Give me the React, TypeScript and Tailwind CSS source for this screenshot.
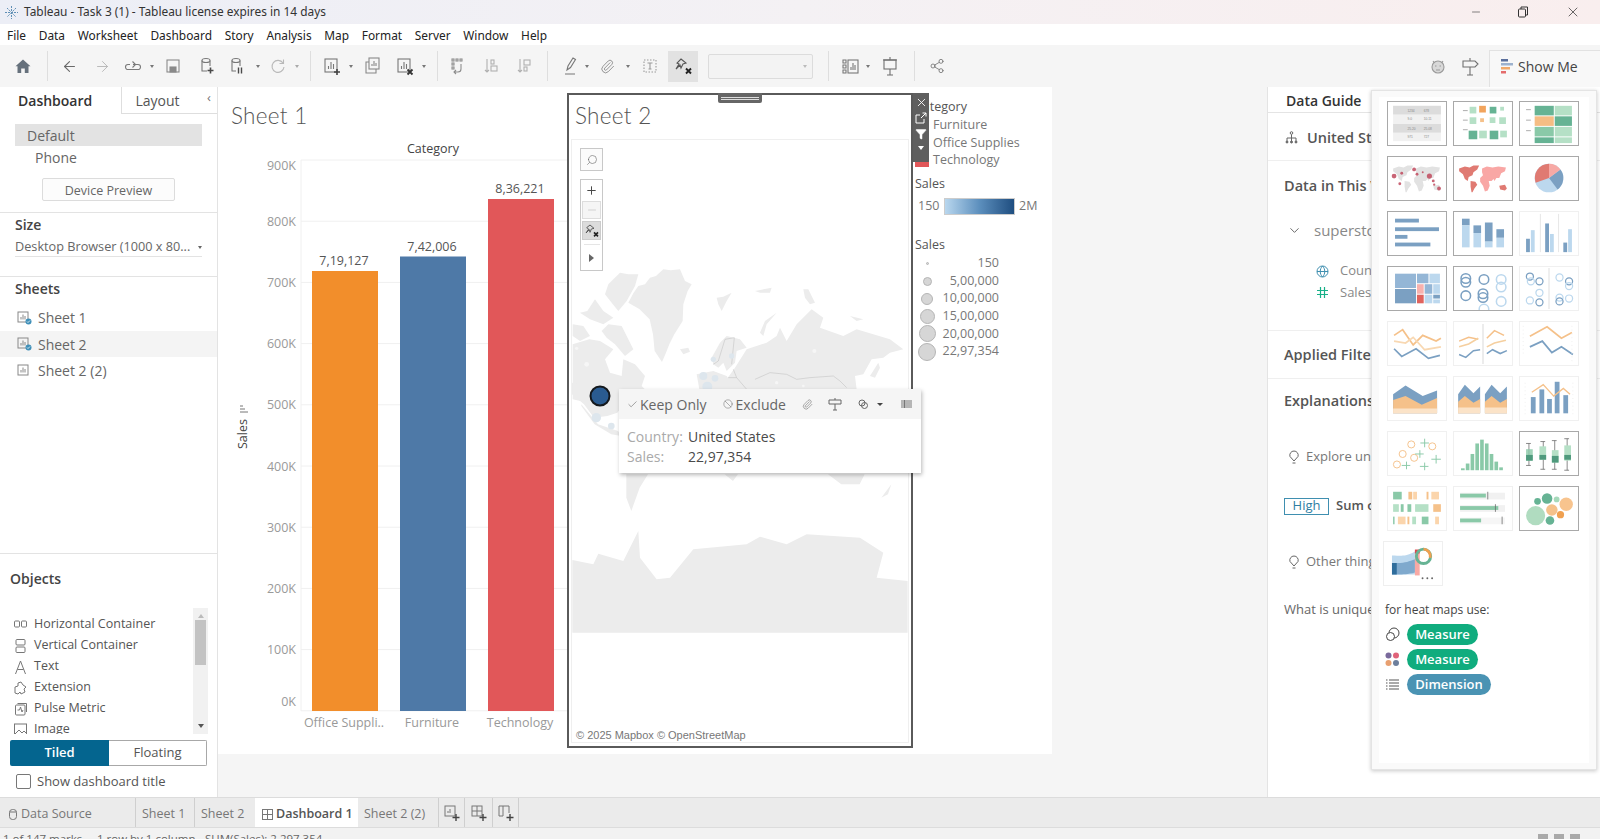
import React from "react";
import { ArrowLeft, ArrowRight, Share2, Paperclip, X, Minus, Plus, ChevronDown, Search, Filter, Check, Ban } from "lucide-react";

const Ico = ({ children, c = "#7a7a7a", cls = "w-[24px]" }: { children: React.ReactNode; c?: string; cls?: string }) => (
  <svg className={`${cls} h-[24px] shrink-0`} viewBox="0 0 24 24" fill="none" stroke={c} strokeWidth={1.1}>
    {children}
  </svg>
);
const Arrow = ({ cls, c = "#777" }: { cls: string; c?: string }) => (
  <div className={`w-[8px] h-[24px] flex items-center justify-center shrink-0 ${cls}`}>
    <div className="w-0 h-0 border-l-[2.5px] border-r-[2.5px] border-t-[3px] border-l-transparent border-r-transparent" style={{ borderTopColor: c }} />
  </div>
);
const Sep = ({ cls }: { cls: string }) => <div className={`w-px h-[30px] bg-[#dedede] shrink-0 ${cls}`} />;
const Wrap = ({ cls, children }: { cls: string; children: React.ReactNode }) => <div className={`w-[24px] h-[24px] shrink-0 flex items-center justify-center ${cls}`}>{children}</div>;
const ChartIco = ({ c = "#777", mark }: { c?: string; mark?: React.ReactNode }) => (
  <Ico c={c}>
    <rect x="6" y="5" width="12" height="13" />
    <path d="M9.5 15v-3M12 15V8M14.5 15v-5" />
    {mark}
  </Ico>
);

const Toolbar = () => (
  <div className="h-[42px] bg-[#f5f5f5] flex items-center pl-[11px] shrink-0">
    <Wrap cls="">
      <Ico c="none"><path d="M12 5.5l7.5 6.8h-2V19h-3.7v-4.6h-3.6V19H6.5v-6.7h-2z" fill="#66717c" /></Ico>
    </Wrap>
    <Sep cls="ml-[12px]" />
    <Wrap cls="ml-[9px]"><ArrowLeft size={17} strokeWidth={1.5} color="#6a6a6a" /></Wrap>
    <Wrap cls="ml-[9px]"><ArrowRight size={17} strokeWidth={1.3} color="#b5b5b5" /></Wrap>
    <Wrap cls="ml-[7px]"><Ico><path d="M9 10.5H7a2.5 2.5 0 0 0 0 5h10a2.5 2.5 0 0 0 0-5h-5" /><path d="M11.5 7.5l3 3-3 3" /></Ico></Wrap>
    <Arrow cls="ml-[3px]" />
    <Wrap cls="ml-[5px]"><Ico c="#8a8a8a"><rect x="6" y="6" width="12" height="12" /><rect x="9" y="13" width="6" height="5" fill="#8a8a8a" /></Ico></Wrap>
    <Wrap cls="ml-[10px]"><Ico c="#777"><ellipse cx="11" cy="6.5" rx="4" ry="2" /><path d="M7 6.5V17h5M15 6.5V12" /><path d="M15.5 13.5v6M12.5 16.5h6" stroke="#4a4a4a" strokeWidth={1.6} /></Ico></Wrap>
    <Wrap cls="ml-[6px]"><Ico c="#777"><ellipse cx="11" cy="6.5" rx="4" ry="2" /><path d="M7 6.5V17h4M15 6.5V12" /><path d="M13.5 13.5v6M16.5 13.5v6" stroke="#4a4a4a" strokeWidth={1.4} /></Ico></Wrap>
    <Arrow cls="ml-[5px]" />
    <Wrap cls="ml-[4px]"><Ico c="#b9b9b9"><path d="M17 9a6 6 0 1 0 1 4" /><path d="M17.5 5.5V9.5H13.5" /></Ico></Wrap>
    <Arrow cls="ml-[3px]" c="#aaa" />
    <Sep cls="ml-[9px]" />
    <Wrap cls="ml-[8px]"><ChartIco mark={<path d="M18 15v6M15 18h6" stroke="#444" strokeWidth={1.6} />} /></Wrap>
    <Arrow cls="ml-[4px]" />
    <Wrap cls="ml-[5px]"><Ico c="#888"><rect x="9" y="4" width="10" height="11" /><path d="M12 12v-2M14 12V7M16 12V9" /><path d="M9 8H6v11h10v-4" /></Ico></Wrap>
    <Wrap cls="ml-[8px]"><ChartIco mark={<path d="M15.5 15.5l5 5M20.5 15.5l-5 5" stroke="#333" strokeWidth={1.8} />} /></Wrap>
    <Arrow cls="ml-[4px]" />
    <Sep cls="ml-[9px]" />
    <Wrap cls="ml-[7px]"><Ico c="#8d8d8d"><rect x="7" y="5" width="2" height="2" /><rect x="11" y="5" width="2" height="2" /><rect x="15" y="5" width="2" height="2" /><rect x="7" y="9" width="2" height="2" /><rect x="7" y="13" width="2" height="2" /><path d="M16 10v5a3 3 0 0 1-3 3H9M11 16l-2 2 2 2" /></Ico></Wrap>
    <Wrap cls="ml-[10px]"><Ico c="#b0b0b0"><path d="M8 5v13M6 16l2 2 2-2" /><rect x="12" y="6" width="3" height="4" /><rect x="12" y="12" width="6" height="5" /></Ico></Wrap>
    <Wrap cls="ml-[9px]"><Ico c="#b0b0b0"><path d="M8 5v13M6 16l2 2 2-2" /><rect x="12" y="6" width="6" height="5" /><rect x="12" y="13" width="3" height="4" /></Ico></Wrap>
    <Sep cls="ml-[11px]" />
    <Wrap cls="ml-[10px]"><Ico c="#777"><path d="M9 16l1-4 5-8 2.5 1.5-5 8zM7 20h10" /></Ico></Wrap>
    <Arrow cls="ml-px" />
    <Wrap cls="ml-[4px]"><Paperclip size={15} strokeWidth={1.2} color="#777" /></Wrap>
    <Arrow cls="ml-[5px]" />
    <Wrap cls="ml-[6px]"><Ico c="#9a9a9a"><rect x="6" y="6" width="12" height="12" strokeDasharray="1.5 1.5" /><path d="M9.5 9h5M12 9v6M10.5 15h3" /></Ico></Wrap>
    <div className="ml-[6px] w-[30px] h-[31px] bg-[#e2e2e2] flex items-center justify-center shrink-0">
      <Ico c="#555"><path d="M10 5l5 4-3 1-2 4-1-3-4 4 3-5-2-1z" /><path d="M15 14.5l5 5M20 14.5l-5 5" stroke="#222" strokeWidth={1.9} /></Ico>
    </div>
    <div className="ml-[10px] w-[105px] h-[25px] border border-[#dcdcdc] bg-[#f3f3f3] rounded-[2px] flex items-center justify-end pr-[3px] shrink-0"><Arrow cls="" c="#bbb" /></div>
    <Sep cls="ml-[15px]" />
    <Wrap cls="ml-[9px]"><Ico c="#777"><path d="M5 6h3v3H5zM5 11h3v3H5zM5 16h3v3H5z" /><rect x="10" y="6" width="10" height="13" /><path d="M13 16v-3M15 16V9M17 16v-5" /></Ico></Wrap>
    <Arrow cls="ml-[2px]" />
    <Wrap cls="ml-[6px]"><Ico c="#6f6f6f"><path d="M5 6h14" /><rect x="6" y="6" width="12" height="9" /><path d="M12 3v3M12 15v6M9 21h6" /></Ico></Wrap>
    <Sep cls="ml-[12px]" />
    <Wrap cls="ml-[10px]"><Share2 size={16} strokeWidth={1.2} color="#6f6f6f" /></Wrap>
    <div className="ml-auto flex items-center self-end h-[37px] pb-[5px]">
      <Wrap cls="mr-[8px]"><Ico c="#9a9a9a"><circle cx="12" cy="13" r="6" fill="#d8d8d8" /><path d="M7 7l1.5 2M17 7l-1.5 2M9 12h1.5M13.5 12H15M10 16h4" /></Ico></Wrap>
      <Wrap cls="mr-[7px]"><Ico c="#6f6f6f"><path d="M5 7h12l3 3-3 3H5zM12 4v3M12 13v8M9 21h6" /></Ico></Wrap>
      <div className="w-[111px] h-[37px] -mb-[5px] pb-[6px] bg-[#f8f8f8] border-l border-t border-[#e2e2e2] flex items-center pl-[11px] gap-[5px] text-[14px] text-[#444] font-['Open_Sans',sans-serif]">
        <svg width="12" height="18" viewBox="0 0 12 18"><rect x="0" y="2" width="7" height="2.5" fill="#5b6f9c" /><rect x="0" y="6" width="12" height="2.5" fill="#9db2ce" /><rect x="0" y="10" width="9" height="2.5" fill="#f2a96a" /><rect x="0" y="14" width="5" height="2.5" fill="#e46c6c" /></svg>
        Show Me
      </div>
    </div>
  </div>
);

const Obj = ({ icon, label }: { icon: React.ReactNode; label: string }) => (
  <div className="h-[21px] flex items-center gap-[7px] pl-[14px] shrink-0">
    <svg className="shrink-0" width="13" height="16" viewBox="0 0 13 16" fill="none" stroke="#777" strokeWidth="1">{icon}</svg>
    <span>{label}</span>
  </div>
);

const SheetIcon = ({ done }: { done?: boolean }) => (
  <svg className="shrink-0" width="15" height="16" viewBox="0 0 15 16" fill="none" stroke="#888" strokeWidth="1">
    <rect x="1" y="2" width="10" height="10" />
    <path d="M4 9.5V7M6 9.5V4.5M8 9.5V6" />
    {done && <circle cx="11.5" cy="11.5" r="3" fill="#3f8fb8" stroke="none" />}
    {done && <path d="M10 11.5l1 1 2-2" stroke="#fff" strokeWidth="0.8" />}
  </svg>
);

const Sidebar = () => (
  <div className="w-[218px] shrink-0 bg-white border-r border-[#e3e3e3] flex flex-col text-[12.5px] text-[#555] overflow-hidden">
    <div className="flex h-[27px] shrink-0">
      <div className="w-[122px] pl-[18px] flex items-center font-semibold text-[14px] text-[#333]">Dashboard</div>
      <div className="w-[96px] bg-white border-l border-b border-[#dedede] flex items-center pl-[13px] text-[14px] text-[#555] relative">
        Layout
        <span className="absolute right-[6px] top-[1px] text-[13px] text-[#777]">‹</span>
      </div>
    </div>
    <div className="mt-[10px] mx-[15px] h-[22px] bg-[#e3e3e3] pl-[12px] flex items-center text-[14px] text-[#666] shrink-0">Default</div>
    <div className="h-[22px] pl-[35px] flex items-center text-[14px] text-[#666] shrink-0">Phone</div>
    <div className="mt-[10px] ml-[42px] w-[133px] h-[23px] pt-[3px] border border-[#dcdcdc] rounded-[2px] bg-[#fcfcfc] flex items-center justify-center text-[12.5px] text-[#666] shrink-0">Device Preview</div>
    <div className="mt-[11px] h-px bg-[#e3e3e3] shrink-0" />
    <div className="h-[23px] pl-[15px] flex items-center font-semibold text-[14px] text-[#444] shrink-0">Size</div>
    <div className="h-[21px] pt-[2px] mx-[15px] border-b border-[#e3e3e3] flex items-center justify-between text-[12.7px] text-[#666] shrink-0">
      <span className="whitespace-nowrap">Desktop Browser (1000 x 80...</span>
      <div className="w-0 h-0 border-l-[2.5px] border-r-[2.5px] border-t-[3px] border-l-transparent border-r-transparent border-t-[#666]" />
    </div>
    <div className="mt-[19px] h-px bg-[#e3e3e3] shrink-0" />
    <div className="h-[23px] pl-[15px] flex items-center font-semibold text-[14px] text-[#444] shrink-0">Sheets</div>
    <div className="mt-[4px] shrink-0 text-[14px] text-[#666]">
      <div className="h-[27px] pl-[17px] flex items-center gap-[6px]"><SheetIcon done />Sheet 1</div>
      <div className="h-[26px] pl-[17px] flex items-center gap-[6px] bg-[#f4f4f4]"><SheetIcon done />Sheet 2</div>
      <div className="h-[27px] pl-[17px] flex items-center gap-[6px]"><SheetIcon />Sheet 2 (2)</div>
    </div>
    <div className="flex-1" />
    <div className="h-px bg-[#e3e3e3] shrink-0" />
    <div className="h-[54px] pt-[15px] pl-[10px] shrink-0 font-semibold text-[14px] text-[#444] leading-[20px]">Objects</div>
    <div className="h-[126px] flex shrink-0">
      <div className="flex-1 overflow-hidden pt-[6px]">
        <Obj label="Horizontal Container" icon={<><rect x="0.5" y="4" width="5" height="6" rx="1" /><rect x="7.5" y="4" width="5" height="6" rx="1" /></>} />
        <Obj label="Vertical Container" icon={<><rect x="2" y="1.5" width="9" height="5.5" rx="1" /><rect x="2" y="9" width="9" height="5.5" rx="1" /></>} />
        <Obj label="Text" icon={<path d="M1.5 15L6.5 2l5 13M3.5 10.5h6" />} />
        <Obj label="Extension" icon={<path d="M1 7l3-1V3l3-1 2 3 3 2-2 2 1 3-4 2-1-2-2 2-3-1V9z" />} />
        <Obj label="Pulse Metric" icon={<><rect x="1.5" y="4" width="9.5" height="10" rx="1" /><path d="M3.5 2.5h9V11M3.5 9h2l1-3 1.5 5 1-2" /></>} />
        <Obj label="Image" icon={<><rect x="0.5" y="2" width="12" height="12" /><path d="M1 12l4-4 3 3 2-2 3 3" /></>} />
      </div>
      <div className="w-[15px] bg-[#f1f1f1] mr-[9px] flex flex-col items-center shrink-0">
        <div className="mt-[6px] w-0 h-0 border-l-[3px] border-r-[3px] border-b-[4px] border-l-transparent border-r-transparent border-b-[#bbb]" />
        <div className="mt-[2px] w-[11px] h-[45px] bg-[#c3c3c3]" />
        <div className="mt-auto mb-[6px] w-0 h-0 border-l-[3px] border-r-[3px] border-t-[4px] border-l-transparent border-r-transparent border-t-[#555]" />
      </div>
    </div>
    <div className="mt-[6px] ml-[10px] w-[197px] h-[26px] flex rounded-[2px] shrink-0 overflow-hidden text-[13px]">
      <div className="w-[99px] bg-[#04658f] text-white font-semibold flex items-center justify-center">Tiled</div>
      <div className="flex-1 bg-white border-y border-r border-[#a8a8a8] text-[#555] flex items-center justify-center">Floating</div>
    </div>
    <div className="h-[31px] pl-[16px] flex items-center gap-[6px] shrink-0 text-[#555] text-[13px]">
      <div className="w-[15px] h-[15px] border border-[#777] rounded-[2px] bg-white" />
      Show dashboard title
    </div>
  </div>
);

const ticks = [900, 800, 700, 600, 500, 400, 300, 200, 100, 0];
const bars = [
  { x: 312, top: 271, c: "#f28e2b", v: "7,19,127", l: "Office Suppli.." },
  { x: 400, top: 256.5, c: "#4e79a7", v: "7,42,006", l: "Furniture" },
  { x: 488, top: 199, c: "#e15759", v: "8,36,221", l: "Technology" },
];

const Sheet1 = () => (
  <div className="w-[349px] shrink-0 flex flex-col">
    <div className="h-[50px] pl-[13px] pt-[12px] text-[22.5px] leading-[34px] text-[#555] font-['Lato',sans-serif] font-light tracking-[0.3px] shrink-0">Sheet 1</div>
    <svg className="w-[349px] h-[617px] block" viewBox="218 137 349 617" fontFamily="'Open Sans', sans-serif">
      <text x="433" y="153" textAnchor="middle" fontSize="12.5" fill="#444">Category</text>
      {ticks.map((t, i) => {
        const y = 160 + i * 61.2;
        const ly = t === 900 ? y + 10 : t === 0 ? y - 4.5 : y + 4.5;
        return (
          <g key={t}>
            <line x1="301" x2="567" y1={y} y2={y} stroke="#f0f0f0" />
            <text x="296" y={ly} textAnchor="end" fontSize="12.5" fill="#9a9a9a">{t}K</text>
          </g>
        );
      })}
      <line x1="301" x2="301" y1="160" y2="711" stroke="#f0f0f0" />
      {bars.map((b) => (
        <g key={b.x}>
          <rect x={b.x} y={b.top} width="66" height={711 - b.top} fill={b.c} />
          <text x={b.x + 32} y={b.top - 6} textAnchor="middle" fontSize="12.5" fill="#555">{b.v}</text>
          <text x={b.x + 32} y="727" textAnchor="middle" fontSize="12.5" fill="#999">{b.l}</text>
        </g>
      ))}
      <text transform="translate(247 449) rotate(-90)" fontSize="12.5" fill="#444">Sales</text>
      <path d="M240 412h8M240 409h5M240 406h3" stroke="#777" strokeWidth="1" />
    </svg>
  </div>
);

const land = "#ececec";
const WorldMap = () => (
  <svg className="w-[336px] h-[604px] block" viewBox="572 139 336 604">
    <g transform="translate(570 260) scale(0.3333)" fill={land}>
      <path d="M175 125l15-28 15-22 20-5 15-20 18-5 22-20 22 3 28-3 15 35 20 10-12 20-13 40-2 50-25 40-15 30-10 25-12 28-22-33-5-50-10-45-30-30z" />
      <path d="M115 70l35-35 25 5 30 0-10 35-25 45-25 30-20-25-20-25zM30 155l22-5 23-35 25 35 30 20-30 20-40-15zM8 190l32 5 20 30-30 15-22-15zM115 190l40 5 20 40 15 30-25 20-30-35-25-20-15-20z" />
      <path d="M8 250l50-15 32 5 40 25-25 30 15 40 35 10 5-50 35 15 30 35-10 30 20 20-10 15-60 20-25 15-132-30z" />
      <path d="M6 365l146 20 20 30-30 40-30 10-40 5-30-40-36-30z" />
      <path d="M34 430l50 60 60 20 10 15-30-5-50-30-40-55z" />
      <path d="M330 265l25-5 5 12-20 8zM440 110l20-3 25-12-15 25-15 30-10-20zM555 90l50-10-5 15-30 0zM620 155l-35 25-15 35 10 10 10-35zM700 85l15 0 20 40-15 5-15-20zM840 165l40 10-20 5z" />
      <path d="M425 290l25-45 20-20 40 10 20 25-30 10-5 35-25 25-10-25-15 15-15-10z" />
      <path d="M495 320l35-55 60-20 30-20 10-25 20 40 30-50 45-45 35 25-10 30 70 25 40-20 100 30 40 30-40 10-20 15-35 5-25 45-25 5 5 40-220 10-160 0-10-40z" />
      <path d="M380 340l50-10 40 15 30 45-110 5z" />
      <path d="M900 345l25-40 5 15-15 30z" />
      <path d="M464 640h40l-15 20zM774 640l110 0-15 30-55 0zM169 640h65l-25 40-25 70-15-40zM934 710l30-40-10 30z" />
    </g>
    <g transform="translate(570 260) scale(0.3333)" fill="none" stroke="#bdbdbd" strokeWidth="1.5">
      <path d="M430 310l15-10 20-65 28-5-8 80" />
      <path d="M490 325l10 25-25 0M500 350l30 35M555 355l45-20 50 5 30 15 40-5 70-5 20 15 20 20" />
    </g>
    <g transform="translate(570 260) scale(0.3333)" fill="#dde6ed">
      <circle cx="400" cy="345" r="12" /><circle cx="435" cy="352" r="10" /><circle cx="412" cy="377" r="15" />
      <circle cx="430" cy="295" r="8" /><circle cx="485" cy="285" r="8" />
      <circle cx="79" cy="470" r="14" /><circle cx="124" cy="495" r="10" />
    </g>
    <g transform="translate(570 260) scale(0.3333)" fill="#f6f6f6">
      <circle cx="733" cy="270" r="6" /><circle cx="50" cy="310" r="7" /><circle cx="20" cy="262" r="5" />
      <circle cx="620" cy="365" r="5" /><circle cx="700" cy="375" r="4" />
    </g>
    <g transform="translate(560 370) scale(0.3333)" fill={land}>
      <path d="M37 567l63 13 15-32 75 22 45-90 5 80 50 65 40-5 70-85 160-15 40-23 80 23 60-30 160 10 70 45-20 75 93 10v155H37z" />
    </g>
    <circle cx="600" cy="395" r="9.5" fill="#2a5b90" stroke="#14181c" strokeWidth="2" />
  </svg>
);

const MapTools = () => (
  <div className="absolute left-[8px] top-[8px] w-[23px] text-[#666]">
    <div className="h-[23px] border border-[#c8c8c8] bg-[#fbfbfb] flex items-center justify-center"><Search size={12} strokeWidth={1.2} className="-scale-x-100" /></div>
    <div className="mt-[8px] h-[92px] border border-[#c8c8c8] bg-white flex flex-col items-center">
      <div className="h-[20px] flex items-center justify-center"><Plus size={13} strokeWidth={1.8} color="#444" /></div>
      <div className="w-[19px] h-[18px] border border-[#ddd] bg-[#f5f5f5] flex items-center justify-center mt-px"><Minus size={12} strokeWidth={1.2} color="#bbb" /></div>
      <div className="w-[19px] h-[19px] bg-[#dcdcdc] border border-[#ccc] flex items-center justify-center mt-[2px]">
        <svg width="16" height="16" viewBox="0 0 24 24" fill="none" stroke="#555" strokeWidth="1.4"><path d="M9 3l6 5-4 1-2 5-1-4-5 5 4-6-3-2z" /><path d="M15 14l6 6M21 14l-6 6" stroke="#222" strokeWidth="2.4" /></svg>
      </div>
      <div className="w-[16px] h-px bg-[#e5e5e5] mt-[4px]" />
      <div className="flex-1 flex items-center"><div className="w-0 h-0 border-t-[4px] border-b-[4px] border-l-[5px] border-t-transparent border-b-transparent border-l-[#666]" /></div>
    </div>
  </div>
);

const Tooltip = () => (
  <div className="absolute left-[50px] top-[294px] w-[302px] h-[84px] bg-white shadow-[1px_2px_4px_rgba(0,0,0,0.28)] z-20 font-['Open_Sans',sans-serif]">
    <div className="h-[30px] bg-[#f5f5f5] flex items-center pl-[8px] text-[14px] text-[#666]">
      <Check size={11} strokeWidth={1.3} />
      <span className="ml-[2px]">Keep Only</span>
      <Ban size={10} strokeWidth={1.2} className="ml-[16px]" />
      <span className="ml-[3px]">Exclude</span>
      <Paperclip size={11} strokeWidth={1.2} className="ml-[16px]" />
      <svg className="ml-[15px]" width="14" height="14" viewBox="0 0 14 14" fill="none" stroke="#666"><path d="M1 3h12v4H1zM7 1v2M7 7v6M5 13h4" /></svg>
      <svg className="ml-[16px]" width="11" height="11" viewBox="0 0 11 11" fill="none" stroke="#666"><circle cx="4" cy="4" r="3" /><circle cx="6.5" cy="6.5" r="3" /></svg>
      <div className="ml-[8px] w-0 h-0 border-l-[3px] border-r-[3px] border-t-[3.5px] border-l-transparent border-r-transparent border-t-[#444]" />
      <svg className="ml-[18px]" width="11" height="9" viewBox="0 0 11 9" fill="none" stroke="#777" strokeWidth="1"><path d="M0 1h11M0 3h11M0 5h11M0 7h11M3.5 0v8" /></svg>
    </div>
    <div className="pt-[8px] pl-[8px] text-[14px] leading-[20px]">
      <div className="flex"><span className="w-[61px] text-[#aaa]">Country:</span><span className="text-[#4a4a4a] font-medium">United States</span></div>
      <div className="flex"><span className="w-[61px] text-[#aaa]">Sales:</span><span className="text-[#4a4a4a] font-medium">22,97,354</span></div>
    </div>
  </div>
);

const Sheet2 = () => (
  <div className="mt-[6px] w-[346px] h-[655px] shrink-0 border-2 border-[#5a5a5a] bg-white relative flex flex-col">
    <div className="h-[44px] pl-[6px] pt-[4px] text-[22.5px] leading-[34px] text-[#555] font-['Lato',sans-serif] font-light tracking-[0.3px] shrink-0">Sheet 2</div>
    <div className="ml-[2px] w-[338px] h-[604px] border border-[#efefef] relative shrink-0 overflow-hidden">
      <WorldMap />
      <MapTools />
      <div className="absolute left-[4px] -bottom-px text-[11px] text-[#777] font-['Liberation_Sans',sans-serif]">© 2025 Mapbox © OpenStreetMap</div>
    </div>
    <div className="absolute left-[149px] -top-[2px] w-[44px] h-[10px] bg-[#666] rounded-b-[2px] flex flex-col items-center justify-center gap-px">
      <div className="w-[38px] h-px bg-[#ddd]" />
      <div className="w-[38px] h-px bg-[#ddd]" />
    </div>
    <div className="absolute left-[344px] -top-[2px] w-[16px] h-[69px] bg-[#5f5f5f] z-10 flex flex-col items-center text-white">
      <X size={13} strokeWidth={1.6} className="mt-[3px]" />
      <svg className="mt-[3px]" width="12" height="12" viewBox="0 0 12 12" fill="none" stroke="#fff"><path d="M9 7v4H1V3h4M6 6l5-5M7.5 1H11v3.5" /></svg>
      <Filter size={12} fill="#fff" strokeWidth={1} className="mt-[4px]" />
      <div className="mt-[6px] w-0 h-0 border-l-[3.5px] border-r-[3.5px] border-t-[4px] border-l-transparent border-r-transparent border-t-white" />
    </div>
    <Tooltip />
  </div>
);

const SizeRow = ({ d, v }: { d: string; v: string }) => (
  <div className="h-[17.6px] flex items-center relative">
    <div className="w-[24px] flex justify-center"><div className={`rounded-full bg-[#d6d6d6] border border-[#b5b5b5] ${d}`} /></div>
    <div className="w-[60px] text-right">{v}</div>
  </div>
);

const Legends = () => (
  <div className="flex-1 pl-[2px] text-[12.5px] text-[#777] font-['Open_Sans',sans-serif]">
    <div className="pt-[11px] text-[#555] leading-[18px]">Category</div>
    <div className="pl-[18px] leading-[17.6px]">Furniture</div>
    <div className="pl-[18px] leading-[17.6px]">Office Supplies</div>
    <div className="leading-[17.6px] flex items-center">
      <div className="w-[14px] h-[12px] bg-[#e15759] mr-[4px] mt-[3px]" />Technology
    </div>
    <div className="mt-[6px] text-[#555] leading-[18px]">Sales</div>
    <div className="mt-[5px] flex items-center h-[18px] pl-[3px]">
      <span className="w-[26px]">150</span>
      <div className="w-[71px] h-[17px] border border-[#ccc] bg-gradient-to-r from-[#b9d7ee] via-[#5c8fbd] to-[#1f4e80]" />
      <span className="ml-[4px]">2M</span>
    </div>
    <div className="mt-[20px] text-[#555] leading-[18px]">Sales</div>
    <div className="mt-[1px]">
      <SizeRow d="w-[3px] h-[3px]" v="150" />
      <SizeRow d="w-[9px] h-[9px]" v="5,00,000" />
      <SizeRow d="w-[12px] h-[12px]" v="10,00,000" />
      <SizeRow d="w-[15px] h-[15px]" v="15,00,000" />
      <SizeRow d="w-[17px] h-[17px]" v="20,00,000" />
      <SizeRow d="w-[18px] h-[18px]" v="22,97,354" />
    </div>
  </div>
);

const GB = "#7ba0c2", LB = "#bcd8ee", OR = "#f5c18a", GR = "#8ac9a8", DG = "#66b394", LG = "#b5e0c6";
const miniWorld = (f: string, f2: string) => (
  <>
    <path d="M5 12l6-2 5 1 4-2 6 0-2 4-4 3-1 3-4 2-1 4-3-2-2-5-4-3z" fill={f} />
    <path d="M17 25l5 1 2 3-3 4-2 4-1 0-1-6z" fill={f} />
    <path d="M29 12l5-2 6 1 6-1 8 1-1 4-4 2-2 5-3 0-2 3-1-2-2 2-3 0 1 5-2 5-3 1-2-6-3-4 0-4 3-3-1-3z" fill={f2} />
    <path d="M47 30l6-1 2 4-2 2-5-1z" fill={f} />
  </>
);
const tiles: { on?: boolean; g: React.ReactNode }[] = [
  { on: true, g: <>
    <rect x="5" y="4" width="50" height="37" fill="#f1f1f1" /><rect x="5" y="4" width="50" height="9" fill="#dcdcdc" /><rect x="5" y="23" width="50" height="9" fill="#dcdcdc" />
    <g fontSize="3.4" fill="#888" fontFamily="'Liberation Sans',sans-serif"><text x="20" y="10">1234</text><text x="37" y="10">678</text><text x="20" y="19">9.0</text><text x="37" y="19">10.11</text><text x="20" y="29">25.20</text><text x="37" y="29">25.08</text><text x="20" y="38">971</text><text x="37" y="38">727</text></g>
  </> },
  { on: true, g: <>
    <path d="M9 9h5M9 19h5M9 29h5" stroke="#aaa" />
    <rect x="16" y="5" width="7" height="7" fill={LG} /><rect x="26" y="4" width="7" height="7" fill="#f2a45c" /><rect x="37" y="5" width="7" height="7" fill={DG} /><rect x="48" y="5" width="4" height="4" fill={LG} />
    <rect x="16" y="16" width="7" height="7" fill={LG} /><rect x="27" y="17" width="4" height="4" fill={OR} /><rect x="37" y="16" width="6" height="6" fill={LG} /><rect x="47" y="16" width="7" height="7" fill={LG} />
    <rect x="15" y="30" width="9" height="9" fill={DG} /><rect x="26" y="30" width="8" height="8" fill={LG} /><rect x="37" y="30" width="9" height="9" fill={DG} /><rect x="48" y="30" width="7" height="7" fill={LG} />
  </> },
  { on: true, g: <>
    <path d="M6 8h5M6 19h5M6 30h5" stroke="#aaa" />
    <rect x="15" y="4" width="20" height="10" fill={DG} /><rect x="36" y="4" width="18" height="10" fill={LG} /><rect x="15" y="15" width="20" height="10" fill="#f5bd84" /><rect x="36" y="15" width="18" height="10" fill={DG} /><rect x="15" y="26" width="20" height="10" fill={GR} /><rect x="36" y="26" width="18" height="10" fill={LG} /><rect x="15" y="37" width="20" height="6" fill={DG} /><rect x="36" y="37" width="18" height="6" fill={LG} />
  </> },
  { on: true, g: <>
    {miniWorld("#e2e2e2", "#e2e2e2")}
    {[[6,20,2.5],[14,17,1.5],[27,13,2],[30,18,1.5],[43,20,2.7],[47,25,1.5],[12,28,1.5],[53,33,2],[36,16,1],[48,29,1.2]].map(([x,y,r],i)=><circle key={i} cx={x} cy={y} r={r} fill="#bf4a5e" opacity="0.85"/>)}
  </> },
  { on: true, g: miniWorld("#e07a72", "#f9a7a5") },
  { on: true, g: <>
    <circle cx="30" cy="22" r="15" fill={LB} />
    <path d="M30 22L42 13A15 15 0 0 1 39 34z" fill={GB} /><path d="M30 22L16 27A15 15 0 0 1 30 7z" fill="#e07a72" /><path d="M30 22V7A15 15 0 0 1 42 13z" fill="#f7a9a5" />
  </> },
  { on: true, g: <><rect x="7" y="7" width="25" height="4" fill={GB} /><rect x="7" y="16" width="46" height="4" fill={GB} /><rect x="7" y="24" width="13" height="4" fill={GB} /><rect x="7" y="32" width="37" height="4" fill={GB} /></> },
  { on: true, g: <><rect x="8" y="7" width="8" height="7" fill={GB} /><rect x="8" y="14" width="8" height="23" fill={LB} /><rect x="20" y="14" width="8" height="8" fill={GB} /><rect x="20" y="22" width="8" height="15" fill={LB} /><rect x="32" y="11" width="8" height="20" fill={GB} /><rect x="32" y="31" width="8" height="6" fill={LB} /><rect x="44" y="18" width="8" height="9" fill={GB} /><rect x="44" y="27" width="8" height="10" fill={LB} /></> },
  { g: <><path d="M21 2v40M40 2v40" stroke="#e6e6e6" /><rect x="6" y="28" width="4" height="14" fill={GB} /><rect x="11" y="19" width="4" height="23" fill={LB} /><rect x="26" y="12" width="4" height="30" fill={GB} /><rect x="31" y="23" width="4" height="19" fill={LB} /><rect x="45" y="32" width="4" height="10" fill={GB} /><rect x="50" y="18" width="4" height="24" fill={LB} /></> },
  { on: true, g: <><rect x="7" y="7" width="22" height="15" fill="#94b6d6" /><rect x="7" y="23" width="22" height="15" fill={GB} /><rect x="30" y="7" width="12" height="10" fill="#94b6d6" /><rect x="43" y="7" width="11" height="10" fill={LB} /><rect x="30" y="18" width="7" height="10" fill="#f8b1ad" /><rect x="30" y="29" width="7" height="9" fill="#e0635d" /><rect x="38" y="18" width="8" height="10" fill="#94b6d6" /><rect x="47" y="18" width="7" height="10" fill={LB} /><rect x="38" y="29" width="8" height="9" fill={LB} /><rect x="47" y="29" width="7" height="4" fill={GB} /><rect x="47" y="34" width="7" height="4" fill={LB} /></> },
  { on: true, g: <g fill="none" strokeWidth="1.6">{[[12,12,GB],[12,16,GB],[31,13,GB],[49,13,LB],[12,30,GB],[30,28,GB],[30,32,GB],[49,21,LB],[49,36,LB],[31,44,LB]].map(([x,y,c],i)=><circle key={i} cx={x as number} cy={y as number} r="5" stroke={c as string}/>)}</g> },
  { g: <g fill="none" strokeWidth="1.3"><path d="M30 1v43" stroke="#e6e6e6" />{[[10,10,GB],[11,15,LB],[20,15,GB],[20,27,LB],[10,35,LB],[20,37,GB],[41,11,LB],[51,15,GB],[51,20,LB],[41,32,LB],[41,36,GB],[51,33,LB]].map(([x,y,c],i)=><circle key={i} cx={x as number} cy={y as number} r="3.7" stroke={c as string}/>)}</g> },
  { g: <g fill="none" strokeWidth="1.8"><path d="M6 14l9-6 11 16 10-10 14 6 5-3" stroke={OR} /><path d="M6 20l12 2 8-6 12 13 17-3" stroke="#f8d8b2" /><path d="M6 28l8 8 15-8 13 10 12-3" stroke={GB} /></g> },
  { g: <g fill="none" strokeWidth="1.6"><path d="M30 2v42" stroke="#e6e6e6" /><path d="M5 20l10-4 10 2M34 17l8-8 10 5" stroke={OR} /><path d="M5 26l10-3 10-6M34 26l8-4 12-3" stroke="#f5cf9f" /><path d="M5 34l7 3 8-7 7-1M34 33l6-4 8 4 7-3" stroke={GB} /></g> },
  { g: <g fill="none" strokeWidth="1.8"><path d="M10 15l18-10 15 12 11-6" stroke={OR} /><path d="M10 28l13-6 10 12 10-6 12 8" stroke={GB} transform="translate(0 -2)" /><path d="M54 4v38M3 4v30" stroke="#eee" strokeDasharray="1 3" strokeWidth="1" /></g> },
  { g: <><path d="M5 18L18 9l18 11 15-6v24H5z" fill={GB} /><path d="M5 24l13-4 17 9 16-7v16H5z" fill={OR} /><path d="M5 33l46 0v5H5z" fill="#fbe3c8" /></> },
  { g: <><path d="M4 18l7-10 9 9 7-7v28H4z" fill={GB} /><path d="M4 26l7-6 9 7 7-4v15H4z" fill={OR} /><path d="M32 18l7-10 9 9 7-7v28H32z" fill={GB} /><path d="M32 26l7-6 9 7 7-4v15H32z" fill={OR} /><path d="M4 32h23v6H4zM32 32h23v6H32z" fill="#fbe3c8" /></> },
  { g: <><path d="M5 6v34M55 6v34" stroke="#eee" strokeDasharray="1 3" /><rect x="11" y="21" width="5" height="17" fill={GB} /><rect x="20" y="13" width="5" height="25" fill={GB} /><rect x="28" y="23" width="5" height="15" fill={GB} /><rect x="36" y="5" width="5" height="33" fill={GB} /><rect x="45" y="19" width="5" height="19" fill={GB} /><path d="M12 16l12-8 11 12 10-8 7 6" fill="none" stroke={OR} strokeWidth="1.4" /></> },
  { g: <g fill="none" strokeWidth="1"><g stroke={OR}><circle cx="24" cy="13" r="3.7" /><circle cx="15" cy="23" r="3.7" /><circle cx="27" cy="27" r="3.7" /><circle cx="46" cy="15" r="3.7" /><circle cx="9" cy="34" r="3.7" /></g><path d="M38 7v9M33.5 11.5h9M33 19v8M28 23h9M50 24v9M45 28.5h10M38 32v8M33 36h9M19 31v8M14 35h9" stroke={GR} /></g> },
  { g: <g fill={GR}>{[[7,2],[12,7],[17,17],[22,28],[27,32],[32,28],[37,17],[42,9],[47,3]].map(([x,h],i)=><rect key={i} x={x} y={40-h} width="3.8" height={h}/>)}</g> },
  { on: true, g: <><g stroke="#666" fill="none" strokeWidth="0.8"><path d="M9 12v23M6 12h5M6 35h5M24 10v29M21 10h5M21 39h5M36 9v30M33 9h5M33 39h5M49 7v33M46 7h5M46 40h5" /></g><rect x="6" y="18" width="7" height="12" fill={GR} opacity="0.8" /><rect x="6" y="24" width="7" height="6" fill="#4f9a7d" /><rect x="20" y="15" width="7" height="14" fill={LG} /><rect x="20" y="24" width="7" height="5" fill="#4f9a7d" /><rect x="33" y="19" width="7" height="13" fill={LG} /><rect x="33" y="25" width="7" height="7" fill="#4f9a7d" /><rect x="46" y="14" width="7" height="16" fill={LG} /><rect x="46" y="24" width="7" height="5" fill="#4f9a7d" /></> },
  { g: <>{[[5,5,9,GR],[21,5,4,OR],[26,5,4,"#fbd5ac"],[40,5,2,OR],[45,5,8,"#fbd5ac"],[5,18,6,LG],[13,18,3,GR],[20,18,4,GR],[28,18,14,LG],[47,18,8,OR],[5,31,1.5,GR],[10,31,8,"#fbd5ac"],[20,31,2,OR],[25,31,4,LG],[35,31,7,GR],[49,31,4,"#fbd5ac"]].map(([x,y,w,c],i)=><rect key={i} x={x as number} y={y as number} width={w as number} height="8" fill={c as string}/>)}</> },
  { g: <><rect x="6" y="6" width="47" height="7" fill="#f1f1f1" /><rect x="6" y="19" width="47" height="7" fill="#f1f1f1" /><rect x="6" y="32" width="47" height="7" fill="#f6f6f6" /><rect x="6" y="7" width="27" height="4" fill={GR} /><rect x="6" y="20" width="40" height="4" fill={GR} /><rect x="6" y="33" width="22" height="4" fill={GR} /><path d="M35 5v8M43 18v8M50 31v8" stroke="#666" strokeWidth="0.8" /></> },
  { on: true, g: <><circle cx="16" cy="30" r="10" fill="#b0dcc0" /><circle cx="28" cy="12" r="5.5" fill={DG} /><circle cx="18" cy="15" r="3.5" fill={DG} /><circle cx="38" cy="13" r="3" fill="#a6d9ba" /><circle cx="33" cy="24" r="6" fill={OR} /><circle cx="48" cy="18" r="7" fill="#f8c48e" /><circle cx="42" cy="29" r="3.8" fill="#f0a050" /><circle cx="31" cy="35" r="4.5" fill={DG} /></> },
];

const Sankey = () => (
  <svg width="58" height="43" viewBox="0 0 60 45">
    <path d="M8 14c10 0 14 2 24-4v24H8z" fill={LB} />
    <path d="M8 22h6c8 0 12-2 18-4v14c-8 2-12 2-18 2H8z" fill="#7fa9cd" />
    <rect x="8" y="22" width="5" height="12" fill="#2f6d9c" />
    <path d="M32 8h5v27h-5z" fill="#f8a9a5" /><path d="M32 8h5v4h-5z" fill="#d8484f" />
    <circle cx="41" cy="15" r="7.5" fill="none" stroke={DG} strokeWidth="3" />
    <path d="M41 7.5a7.5 7.5 0 0 1 7 9" fill="none" stroke="#f0a050" strokeWidth="3" />
    <circle cx="40" cy="38" r="1" fill="#666" /><circle cx="45" cy="38" r="1" fill="#666" /><circle cx="50" cy="38" r="1" fill="#666" />
  </svg>
);

const Pill = ({ w, bg, label, icon }: { w: string; bg: string; label: string; icon: React.ReactNode }) => (
  <div className="h-[25px] flex items-center gap-[7px]">
    <div className="w-[15px] flex justify-center">{icon}</div>
    <div className={`h-[21px] rounded-full flex items-center justify-center text-white text-[13px] font-semibold ${w} ${bg}`}>{label}</div>
  </div>
);

const ShowMe = () => (
  <div className="absolute left-[1371px] top-[90px] w-[226px] h-[680px] bg-[#fafafa] border border-[#e4e4e4] shadow-[0_1px_4px_rgba(0,0,0,0.22)] z-30 font-['Open_Sans',sans-serif]">
    <div className="absolute left-[7px] right-[7px] top-[6px] bottom-[6px] bg-white" />
    <div className="relative pl-[15px] pt-[10px]">
      <div className="grid grid-cols-[60px_60px_60px] auto-rows-[45px] gap-x-[6px] gap-y-[10px]">
        {tiles.map((t, i) => (
          <div key={i} className={`w-[60px] h-[45px] bg-white border ${t.on ? "border-[#a9a9a9]" : "border-[#f0f0f0]"}`}>
            <svg className="block w-[58px] h-[43px]" viewBox="0 0 60 45">{t.g}</svg>
          </div>
        ))}
      </div>
      <div className="mt-[10px] -ml-[4px] w-[60px] h-[45px] border border-[#efefef] bg-white"><Sankey /></div>
      <div className="mt-[15px] -ml-[2px] text-[12px] leading-[18px] text-[#444]">for heat maps use:</div>
      <div className="-ml-[2px] mt-[3px]">
        <Pill w="w-[71px]" bg="bg-[#10ac7e]" label="Measure" icon={<svg width="15" height="15" viewBox="0 0 15 15" fill="none" stroke="#444"><circle cx="9" cy="6" r="5" /><circle cx="5.5" cy="9.5" r="4" fill="#fff" /></svg>} />
        <Pill w="w-[71px]" bg="bg-[#10ac7e]" label="Measure" icon={<svg width="15" height="15" viewBox="0 0 15 15"><circle cx="3.5" cy="3.5" r="3" fill="#7a6a9c" /><circle cx="11" cy="3.5" r="3" fill="#e0637a" /><circle cx="3.5" cy="11" r="3" fill="#e8a070" /><circle cx="11" cy="11" r="3" fill="#6d7f9c" /></svg>} />
        <Pill w="w-[84px]" bg="bg-[#4a93b3]" label="Dimension" icon={<svg width="13" height="11" viewBox="0 0 13 11" stroke="#555"><path d="M3 1h10M3 4h10M3 7h10M3 10h10M0 1h1.5M0 4h1.5M0 7h1.5M0 10h1.5" /></svg>} />
      </div>
    </div>
  </div>
);

const DataGuide = () => (
  <div className="w-[333px] shrink-0 bg-white border-l border-[#e4e4e4] flex flex-col text-[#555] font-['Open_Sans',sans-serif] whitespace-nowrap overflow-hidden">
    <div className="h-[26px] pt-px border-b border-[#e4e4e4] pl-[18px] flex items-center font-semibold text-[14px] text-[#333] shrink-0">Data Guide</div>
    <div className="h-[48px] border-b border-[#efefef] pl-[17px] pt-[2px] flex items-center gap-[9px] font-semibold text-[14.5px] shrink-0">
      <svg width="13" height="13" viewBox="0 0 13 13" fill="none" stroke="#666"><circle cx="6.5" cy="2" r="1.3" /><path d="M6.5 3.5V7M2 10V7h9v3M6.5 7v3" /><circle cx="2" cy="11" r="1" fill="#666" /><circle cx="6.5" cy="11" r="1" fill="#666" /><circle cx="11" cy="11" r="1" fill="#666" /></svg>
      United States
    </div>
    <div className="h-[49px] pl-[16px] flex items-center font-semibold text-[14.5px] shrink-0">Data in This View</div>
    <div className="h-[40px] pl-[19px] flex items-center gap-[12px] text-[15px] text-[#888] shrink-0"><ChevronDown size={15} strokeWidth={1.4} color="#555" />superstore</div>
    <div className="h-[22px] mt-[10px] pl-[48px] flex items-center gap-[11px] text-[13px] text-[#888] shrink-0">
      <svg width="13" height="13" viewBox="0 0 13 13" fill="none" stroke="#3f8fb0"><circle cx="6.5" cy="6.5" r="5.5" /><path d="M1 6.5h11M6.5 1c-3 3-3 8 0 11M6.5 1c3 3 3 8 0 11" /></svg>
      Country
    </div>
    <div className="h-[21px] pl-[48px] flex items-center gap-[11px] text-[13px] text-[#888] shrink-0">
      <svg width="13" height="13" viewBox="0 0 13 13" fill="none" stroke="#18b088" strokeWidth="1.2"><path d="M4.5 1v11M8.5 1v11M1 4.5h11M1 8.5h11" /></svg>
      Sales
    </div>
    <div className="mt-[27px] border-t border-[#efefef] h-[48px] pl-[16px] flex items-center font-semibold text-[14.5px] shrink-0">Applied Filters</div>
    <div className="border-t border-[#efefef] h-[44px] pl-[16px] flex items-center font-semibold text-[14.5px] shrink-0">Explanations</div>
    <div className="mt-[24px] h-[22px] pl-[20px] flex items-center gap-[6px] text-[13px] text-[#777] shrink-0">
      <svg width="12" height="14" viewBox="0 0 12 14" fill="none" stroke="#666"><path d="M6 11L2 6.5a4.2 4.2 0 1 1 8 0zM4.5 13h3" /></svg>
      Explore underlying data
    </div>
    <div className="mt-[28px] h-[20px] pl-[16px] flex items-center gap-[7px] text-[13px] shrink-0">
      <div className="w-[45px] h-[17px] border border-[#3f8fb0] text-[#2f7ea3] flex items-center justify-center">High</div>
      <span className="font-semibold">Sum of Sales</span>
    </div>
    <div className="mt-[35px] h-[22px] pl-[20px] flex items-center gap-[6px] text-[13px] text-[#777] shrink-0">
      <svg width="12" height="14" viewBox="0 0 12 14" fill="none" stroke="#666"><path d="M6 11L2 6.5a4.2 4.2 0 1 1 8 0zM4.5 13h3" /></svg>
      Other things to explore
    </div>
    <div className="mt-[27px] h-[20px] pl-[16px] flex items-center text-[13px] text-[#666] shrink-0">What is unique about</div>
  </div>
);

const TabAdd = ({ w, children }: { w: string; children: React.ReactNode }) => (
  <div className={`${w} h-full border-r border-[#cfcfcf] flex items-center justify-center shrink-0`}>
    <svg width="18" height="18" viewBox="0 0 18 18" fill="none" stroke="#777">{children}<path d="M13 10v7M9.5 13.5h7" stroke="#444" strokeWidth="1.4" /></svg>
  </div>
);

export default function App() {
  return (
    <div className="relative w-[1600px] h-[839px] overflow-hidden bg-[#f5f5f5] flex flex-col font-['Open_Sans',sans-serif]">
      <div className="h-[24px] shrink-0 bg-gradient-to-r from-[#eceef6] via-[#f4f1f4] to-[#f9eeee] flex items-center pl-[4px] text-[11.9px] text-[#333] font-['Noto_Sans',sans-serif]">
        <svg width="15" height="15" viewBox="0 0 15 15" stroke="#5f8fb5" strokeWidth="1"><path d="M7.5 1v13M1 7.5h13M3 3l9 9M12 3l-9 9" strokeDasharray="2 1" /></svg>
        <span className="ml-[5px]">Tableau - Task 3 (1) - Tableau license expires in 14 days</span>
        <div className="ml-auto flex items-center text-[#333]">
          <Minus size={12} strokeWidth={1.2} className="mr-[35px]" />
          <svg className="mr-[36px]" width="12" height="12" viewBox="0 0 12 12" fill="none" stroke="#333"><rect x="1.5" y="3" width="7" height="8" rx="1" /><path d="M4 3V1h6.5v8H8.5" /></svg>
          <X size={16} strokeWidth={1.1} className="mr-[19px]" />
        </div>
      </div>
      <div className="h-[21px] pt-[2px] shrink-0 bg-white flex items-center pl-[7px] gap-[12.7px] text-[11.9px] text-[#222] font-['Noto_Sans',sans-serif]">
        {["File", "Data", "Worksheet", "Dashboard", "Story", "Analysis", "Map", "Format", "Server", "Window", "Help"].map((m) => <span key={m}>{m}</span>)}
      </div>
      <Toolbar />
      <div className="h-[710px] flex shrink-0">
        <Sidebar />
        <div className="flex-1">
          <div className="w-[834px] h-[667px] bg-white flex">
            <Sheet1 />
            <Sheet2 />
            <Legends />
          </div>
        </div>
        <DataGuide />
      </div>
      <div className="h-[31px] shrink-0 bg-[#ebebeb] border-y border-[#dcdcdc] flex text-[12.5px] text-[#777]">
        <div className="w-[136px] border-r border-[#cfcfcf] flex items-center pl-[9px] gap-[4px] pt-[3px]">
          <svg width="8" height="11" viewBox="0 0 8 11" fill="none" stroke="#777"><rect x="0.5" y="0.5" width="7" height="10" rx="3" /><path d="M0.5 3h7" /></svg>
          Data Source
        </div>
        <div className="w-[59px] border-r border-[#cfcfcf] flex items-center pl-[6px] pt-[3px]">Sheet 1</div>
        <div className="w-[60px] flex items-center pl-[6px] pt-[3px]">Sheet 2</div>
        <div className="w-[103px] bg-white flex items-center pl-[7px] gap-[3px] font-semibold text-[#555] pt-[3px]">
          <svg width="11" height="11" viewBox="0 0 11 11" fill="none" stroke="#777"><rect x="0.5" y="0.5" width="10" height="10" /><path d="M5.5 0v11M0 5.5h11" /></svg>
          Dashboard 1
        </div>
        <div className="w-[81px] border-r border-[#cfcfcf] flex items-center pl-[6px] pt-[3px]">Sheet 2 (2)</div>
        <TabAdd w="w-[26px]"><rect x="2" y="2" width="10" height="10" /><path d="M5 9V7M7 9V5" /></TabAdd>
        <TabAdd w="w-[28px]"><rect x="2" y="2" width="10" height="10" /><path d="M7 2v10M2 7h10" /></TabAdd>
        <TabAdd w="w-[26px]"><path d="M2 2h4v10H2zM6 2h6v7" /></TabAdd>
      </div>
      <div className="h-[11px] shrink-0 bg-[#f2f2f2] overflow-hidden relative text-[11.5px] leading-[16px] text-[#666]">
        <div className="flex pt-[3px] pl-[3px]">
          <span className="w-[94px]">1 of 147 marks</span>
          <span className="w-[108px]">1 row by 1 column</span>
          <span>SUM(Sales): 2,297,354</span>
          <div className="ml-auto mr-[20px] mt-[3px] flex gap-[6px]">
            <div className="w-[10px] h-[10px] bg-[#aaa]" /><div className="w-[10px] h-[10px] bg-[#aaa]" /><div className="w-[10px] h-[10px] bg-[#aaa]" />
          </div>
        </div>
      </div>
      <ShowMe />
    </div>
  );
}
